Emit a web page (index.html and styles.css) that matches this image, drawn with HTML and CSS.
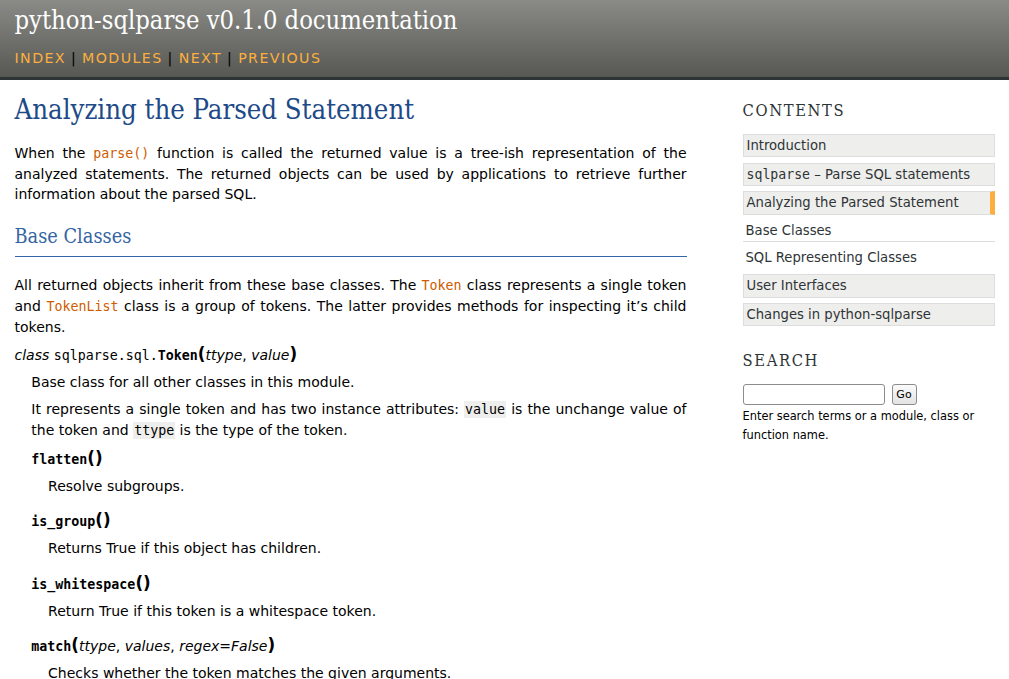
FILE: index.html
```html
<!DOCTYPE html>
<html lang="en">
<head>
<meta charset="utf-8">
<title>Analyzing the Parsed Statement — python-sqlparse v0.1.0 documentation</title>
<link rel="stylesheet" href="styles.css">
</head>
<body>
<div class="header-wrapper">
  <div class="header">
    <h1 class="site-title"><a href="#">python-sqlparse v0.1.0 documentation</a></h1>
    <div class="rel">
      <a href="#">index</a> |
      <a href="#">modules</a> |
      <a href="#">next</a> |
      <a href="#">previous</a>
    </div>
  </div>
</div>
<div class="content-wrapper">
  <div class="content">
    <div class="document">
      <h1 class="page-title">Analyzing the Parsed Statement</h1>
      <p>When the <a href="#"><code>parse()</code></a> function is called the returned value is a tree-ish representation of the analyzed statements. The returned objects can be used by applications to retrieve further information about the parsed SQL.</p>

      <h2 class="section-title">Base Classes</h2>
      <p>All returned objects inherit from these base classes. The <a href="#"><code>Token</code></a> class represents a single token and <a href="#"><code>TokenList</code></a> class is a group of tokens. The latter provides methods for inspecting it’s child tokens.</p>

      <dl class="api">
        <dt><em class="property">class </em><code>sqlparse.sql.</code><code class="descname">Token</code><span class="paren">(</span><em>ttype</em>, <em>value</em><span class="paren">)</span></dt>
        <dd>
          <p>Base class for all other classes in this module.</p>
          <p>It represents a single token and has two instance attributes: <code class="literal">value</code> is the unchange value of the token and <code class="literal">ttype</code> is the type of the token.</p>
          <dl class="api">
            <dt><code class="descname">flatten</code><span class="paren">(</span><span class="paren">)</span></dt>
            <dd><p>Resolve subgroups.</p></dd>
          </dl>
          <dl class="api">
            <dt><code class="descname">is_group</code><span class="paren">(</span><span class="paren">)</span></dt>
            <dd><p>Returns True if this object has children.</p></dd>
          </dl>
          <dl class="api">
            <dt><code class="descname">is_whitespace</code><span class="paren">(</span><span class="paren">)</span></dt>
            <dd><p>Return True if this token is a whitespace token.</p></dd>
          </dl>
          <dl class="api">
            <dt><code class="descname">match</code><span class="paren">(</span><em>ttype</em>, <em>values</em>, <em>regex=False</em><span class="paren">)</span></dt>
            <dd><p>Checks whether the token matches the given arguments.</p></dd>
          </dl>
        </dd>
      </dl>
    </div>

    <div class="sidebar">
      <h3 class="side-title">Contents</h3>
      <ul class="toc">
        <li class="toc-l1"><a href="#">Introduction</a></li>
        <li class="toc-l1"><a href="#"><code class="side-code">sqlparse</code> – Parse SQL statements</a></li>
        <li class="toc-l1 current"><a href="#">Analyzing the Parsed Statement</a>
          <ul>
            <li class="toc-l2"><a href="#">Base Classes</a></li>
            <li class="toc-l2"><a href="#">SQL Representing Classes</a></li>
          </ul>
        </li>
        <li class="toc-l1"><a href="#">User Interfaces</a></li>
        <li class="toc-l1"><a href="#">Changes in python-sqlparse</a></li>
      </ul>

      <h3 class="side-title search-title">Search</h3>
      <form class="search-form" action="#">
        <input class="search-input" type="text" name="q">
        <button class="search-go" type="button">Go</button>
      </form>
      <p class="searchtip">Enter search terms or a module, class or function name.</p>
    </div>
  </div>
</div>
</body>
</html>
```

FILE: styles.css
```css
* {
  margin: 0;
  padding: 0;
  box-sizing: border-box;
}

body {
  font-family: "DejaVu Sans", Verdana, sans-serif;
  font-size: 14px;
  line-height: 20px;
  color: #000;
  background: #fff;
}

a {
  color: #ce5c00;
  text-decoration: none;
}

code {
  font-family: "DejaVu Sans Mono", monospace;
  font-size: 13.3px;
}

/* Header */
.header-wrapper {
  background: linear-gradient(#8a8b86, #575853);
  border-bottom: 3px solid #2e3436;
}

.header {
  width: 980px;
  margin: 0 auto;
  padding: 6px 0 9px;
}

.site-title {
  font-family: "DejaVu Serif Condensed", "DejaVu Serif", serif;
  font-stretch: condensed;
  font-weight: normal;
  font-size: 25.3px;
  line-height: 30px;
}

.site-title a {
  color: #fff;
}

.rel {
  margin-top: 12.6px;
  line-height: 19.6px;
  font-size: 14.2px;
  letter-spacing: .1em;
  word-spacing: -1px;
  color: #000;
}

.rel a {
  color: #fcaf3e;
  text-transform: uppercase;
}

/* Content */
.content-wrapper {
  padding: 13px 0 20px;
}

.content {
  width: 980px;
  margin: 0 auto;
  display: flex;
  justify-content: space-between;
  align-items: flex-start;
}

.document {
  width: 700px;
  padding-right: 28px;
  text-align: justify;
}

.page-title {
  font-family: "DejaVu Serif Condensed", "DejaVu Serif", serif;
  font-stretch: condensed;
  font-weight: normal;
  font-size: 27.3px;
  line-height: 33px;
  color: #204a87;
  padding-bottom: 17px;
}

.document p {
  margin-bottom: 7px;
}

.section-title {
  font-family: "DejaVu Serif Condensed", "DejaVu Serif", serif;
  font-stretch: condensed;
  font-weight: normal;
  font-size: 19.8px;
  line-height: 24px;
  color: #3465a4;
  margin-top: 20.8px;
  padding-bottom: 7.2px;
  border-bottom: 1px solid #3465a4;
  margin-bottom: 17.5px;
}

.literal {
  background: #eeeeec;
  padding: 1px;
}

.api dt {
  text-align: left;
}

.api dd {
  margin: 6px 0 14.5px 16.8px;
}

.descname {
  font-weight: bold;
}

.paren {
  font-size: 16.8px;
  font-weight: bold;
}

/* Sidebar */
.sidebar {
  width: 252px;
  font-size: 12.6px;
  line-height: 19.6px;
  margin-top: 8.25px;
}

.side-title {
  font-family: "DejaVu Serif Condensed", "DejaVu Serif", serif;
  font-stretch: condensed;
  font-weight: normal;
  font-size: 16.4px;
  line-height: 19.6px;
  letter-spacing: .1em;
  text-transform: uppercase;
  color: #2e3436;
  padding-bottom: 12.85px;
}

.toc,
.toc ul {
  list-style: none;
}

.toc a {
  display: block;
  font-size: 13.2px;
  color: #2e3436;
  padding: 1px 1px 1px 3px;
  margin-bottom: 5.04px;
}

.toc-l1 > a {
  border: 1px solid #dddddd;
  background: #eeeeec;
}

.toc-l1.current > a {
  border-right: 5px solid #fcaf3e;
}

.toc-l2 > a {
  border-bottom: 1px solid #dddddd;
}

.toc-l2:last-child > a {
  border-bottom: none;
}

.side-code {
  font-size: 13.2px;
}

.search-title {
  margin-top: 24.7px;
  padding-bottom: 13.85px;
}

.search-form {
  display: flex;
  align-items: center;
}

.search-input {
  width: 142px;
  height: 21px;
  border: 1px solid #8c8c8c;
  border-radius: 3px;
  background: #fff;
  font: inherit;
}

.search-go {
  margin-left: 7px;
  width: 25px;
  height: 21px;
  border: 1px solid #8c8c8c;
  border-radius: 3px;
  background: linear-gradient(#fbfbfb, #e3e3e3);
  font-family: "DejaVu Sans", sans-serif;
  font-size: 11px;
  color: #000;
}

.searchtip {
  margin-top: 1.5px;
  font-size: 11.4px;
  line-height: 19.6px;
}
```
